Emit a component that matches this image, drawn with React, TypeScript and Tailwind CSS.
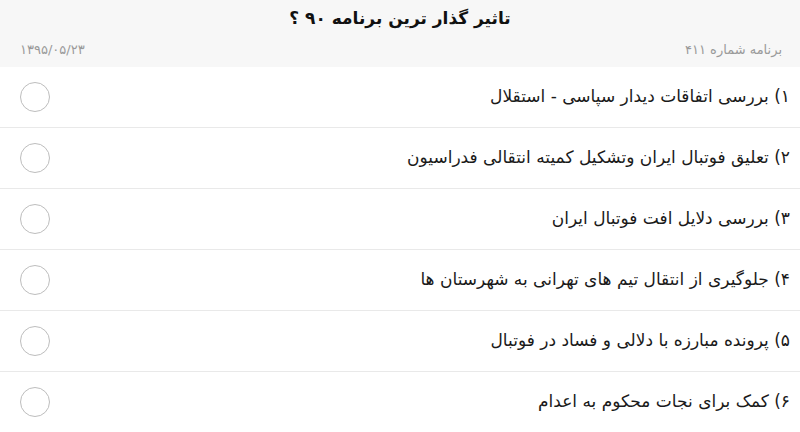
import React from "react";

const options: string[] = [
    "۱) بررسی اتفاقات دیدار سپاسی - استقلال",
    "۲) تعلیق فوتبال ایران وتشکیل کمیته انتقالی فدراسیون",
    "۳) بررسی دلایل افت فوتبال ایران",
    "۴) جلوگیری از انتقال تیم های تهرانی به شهرستان ها",
    "۵) پرونده مبارزه با دلالی و فساد در فوتبال",
    "۶) کمک برای نجات محکوم به اعدام",
];

export default function App() {
    return (
        <div
            dir="rtl"
            className="w-[800px] h-[432px] overflow-hidden bg-white text-[#222]"
            style={{ fontFamily: '"DejaVu Sans", "Noto Sans", sans-serif' }}>
            {/* Poll header */}
            <div className="h-[67px] bg-[#f7f7f7] flex flex-col">
                <div className="h-[38px] flex items-center justify-center text-[17px] font-bold text-[#111]">
                    تاثیر گذار ترین برنامه ۹۰ ؟
                </div>
                <div className="mt-[2px] flex items-center justify-between pr-[18px] pl-[20px] text-[13px] text-[#9a9a9a]">
                    <span>برنامه شماره ۴۱۱</span>
                    <span>۱۳۹۵/۰۵/۲۳</span>
                </div>
            </div>

            {/* Options */}
            {options.map((opt, i) => (
                <div
                    key={i}
                    className="h-[61px] flex items-center justify-between border-b border-[#e9e9e9] pr-[10px] pl-[20px]">
                    <span className="text-[17px] text-[#1a1a1a]">{opt}</span>
                    <span className="w-[30px] h-[30px] rounded-full border border-[#bdbdbd] bg-white" />
                </div>
            ))}
        </div>
    );
}
